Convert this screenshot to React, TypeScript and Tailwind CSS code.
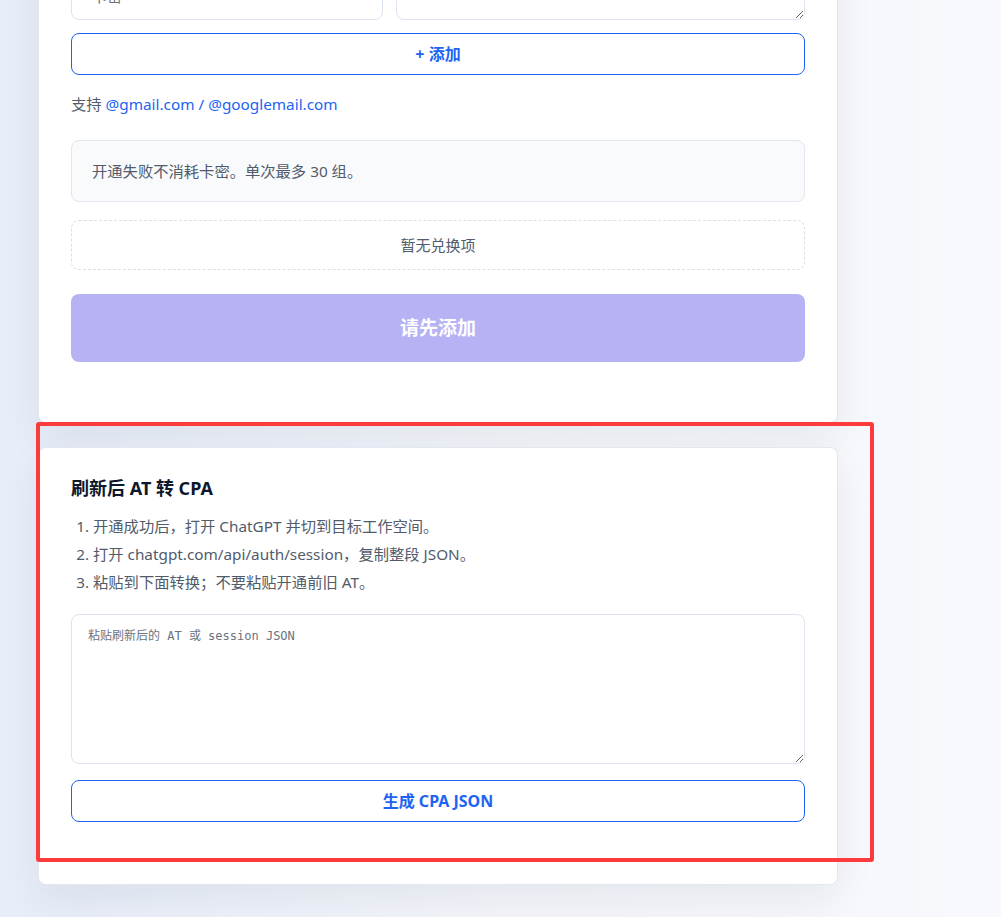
import React from 'react'

const font = { fontFamily: '"Noto Sans", "Noto Sans CJK SC", sans-serif' }

const App = () => {
  return (
    <div
      className="relative h-[917px] w-[1001px] overflow-hidden bg-gradient-to-r from-[#e7edf9] via-[#f4f6fb] to-[#f7f9fd]"
      style={font}
    >
      <div className="ml-[38px] w-[800px]">
        {/* Redeem card (scrolled, top cut off) */}
        <div className="mt-[-61px] rounded-lg border border-[#e2e7f0] bg-white px-8 pt-8 pb-[60px] shadow-[0_16px_40px_rgba(15,23,42,0.07)]">
          <div className="grid grid-cols-[312px_1fr] gap-[13px]">
            <input
              className="h-12 rounded-lg border border-[#dde3ee] px-5 text-[15px] text-slate-700 outline-none placeholder:text-[#6b7280]"
              placeholder="卡密"
            />
            <textarea className="h-12 rounded-lg border border-[#dde3ee] px-4 py-3 text-[15px] outline-none" />
          </div>

          <button className="mt-[13px] flex h-[42px] w-full items-center justify-center rounded-lg border border-[#1d64f2] bg-white text-[16px] font-bold text-[#1d64f2]">
            + 添加
          </button>

          <p className="mt-[18px] text-[15.3px] leading-[22px] text-[#525b6a]">
            支持 <span className="text-[#1d64f2]">@gmail.com / @googlemail.com</span>
          </p>

          <div className="mt-[25px] flex h-[62px] items-center rounded-lg border border-[#e1e6ef] bg-[#f8fafc] px-5 text-[15.3px] text-[#525b6a]">
            开通失败不消耗卡密。单次最多 30 组。
          </div>

          <div className="mt-[18px] flex h-[50px] items-center justify-center rounded-lg border border-dashed border-[#d9e0ec] text-[15px] text-[#525b6a]">
            暂无兑换项
          </div>

          <button
            disabled
            className="mt-6 flex h-[68px] w-full items-center justify-center rounded-lg bg-[#b7b2f4] text-[19px] font-bold text-white"
          >
            请先添加
          </button>
        </div>

        {/* Refresh AT -> CPA card */}
        <div className="mt-6 rounded-lg border border-[#e2e7f0] bg-white px-8 pt-7 pb-[62px] shadow-[0_16px_40px_rgba(15,23,42,0.07)]">
          <h2 className="text-[18px] leading-6 font-bold text-[#0f172a]">刷新后 AT 转 CPA</h2>
          <ol className="mt-3 list-decimal pl-[22px] text-[15.3px] leading-7 text-[#525b6a]">
            <li>开通成功后，打开 ChatGPT 并切到目标工作空间。</li>
            <li>打开 chatgpt.com/api/auth/session，复制整段 JSON。</li>
            <li>粘贴到下面转换；不要粘贴开通前旧 AT。</li>
          </ol>
          <textarea
            className="mt-[18px] block h-[150px] w-full rounded-lg border border-[#dde3ee] px-4 py-3 text-[12px] leading-[18px] text-slate-700 outline-none placeholder:text-[#6b7280]"
            style={{ fontFamily: '"DejaVu Sans Mono", "Noto Sans CJK SC", monospace' }}
            placeholder="粘贴刷新后的 AT 或 session JSON"
          />
          <button className="mt-4 flex h-[42px] w-full items-center justify-center rounded-lg border border-[#1d64f2] bg-white text-[16px] font-bold text-[#1d64f2]">
            生成 CPA JSON
          </button>
        </div>
      </div>

      {/* annotation frame */}
      <div className="pointer-events-none absolute top-[422px] left-[36px] h-[440px] w-[838px] rounded-[3px] border-4 border-[#fc3c3c]" />
    </div>
  )
}

export default App
